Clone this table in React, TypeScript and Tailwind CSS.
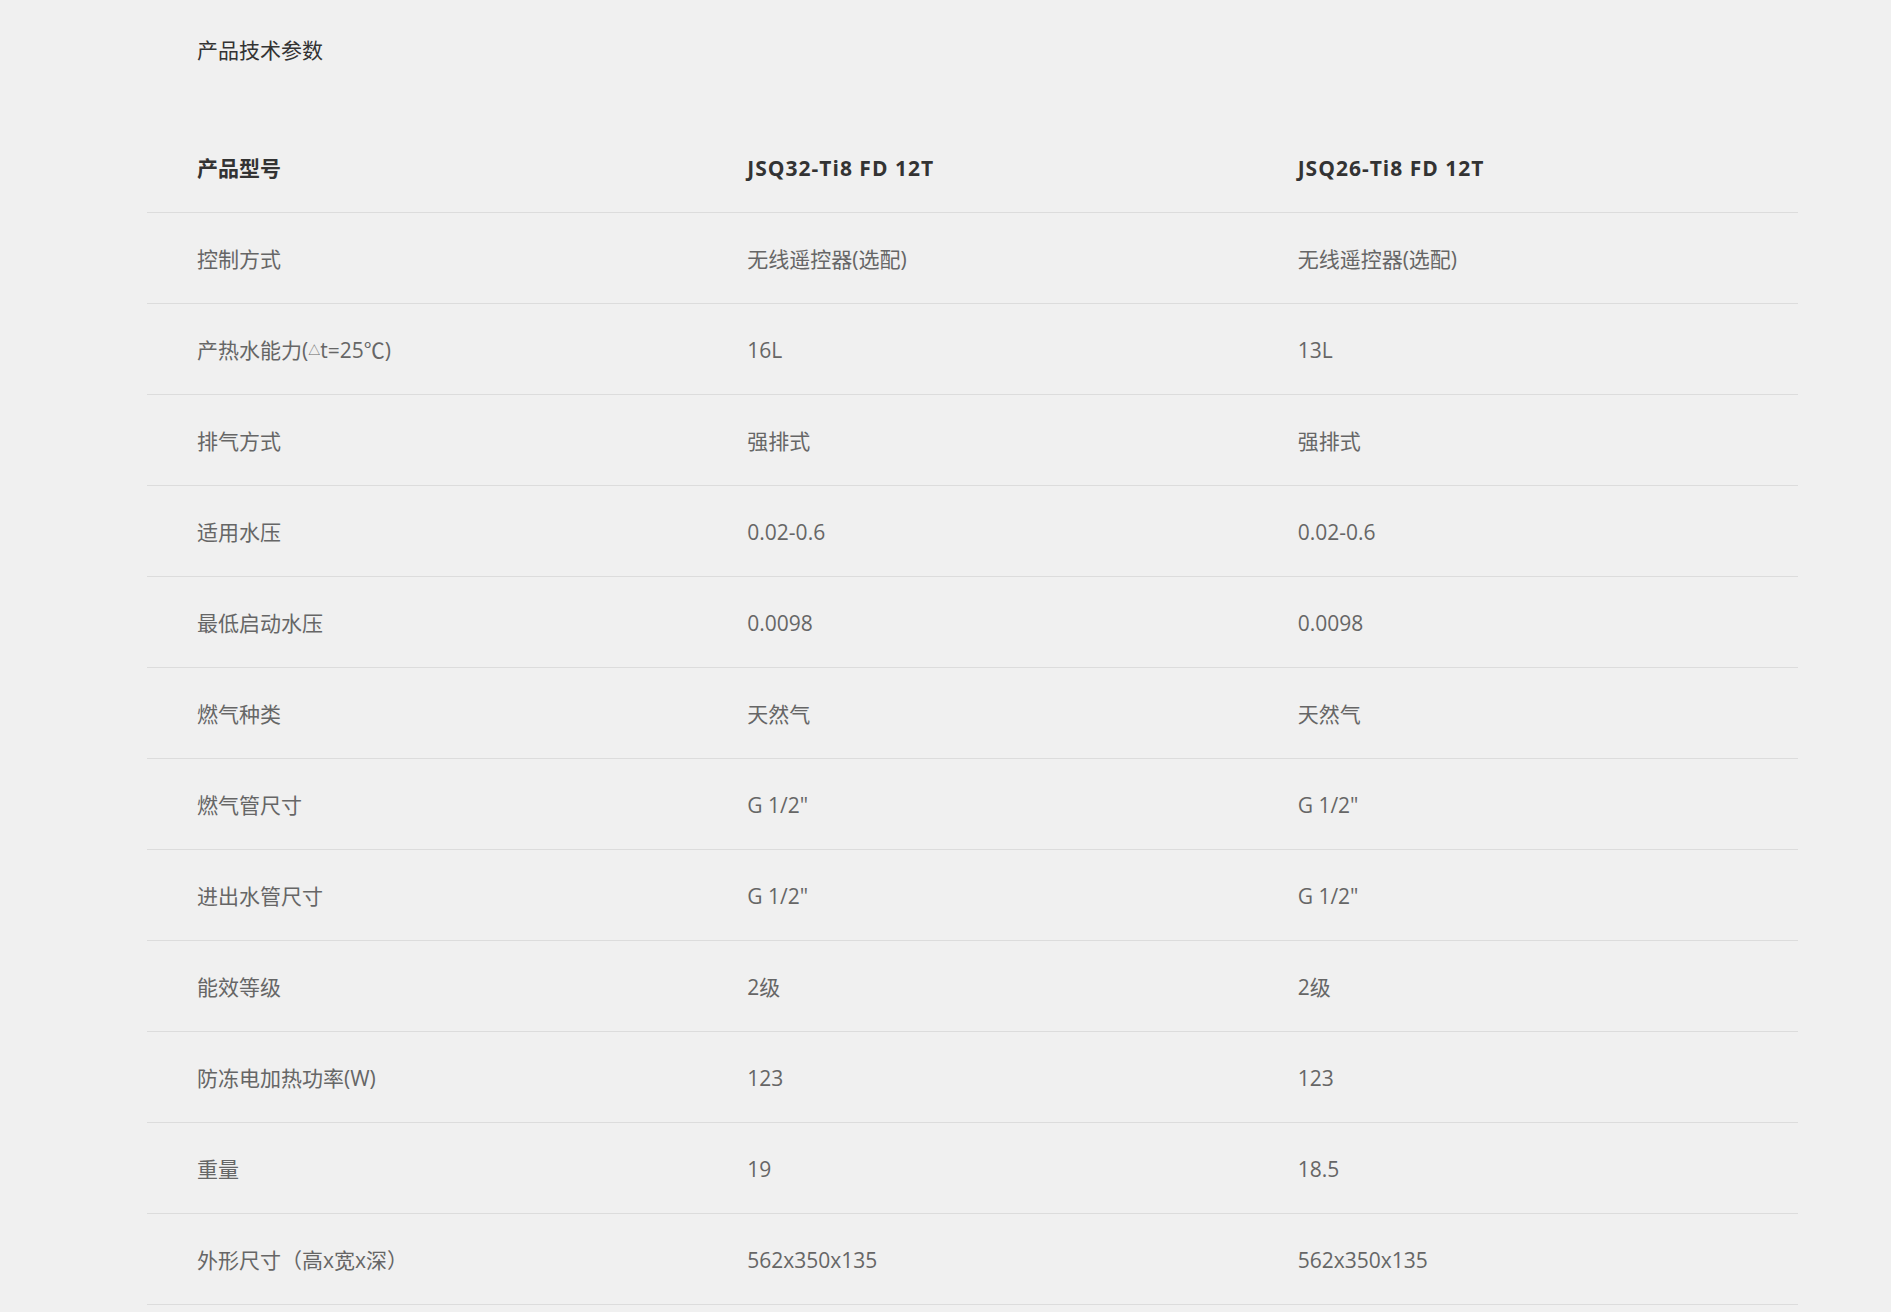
import type { ReactNode } from "react";

const rows: [ReactNode, string, string][] = [
  ["控制方式", "无线遥控器(选配)", "无线遥控器(选配)"],
  [
    <>
      产热水能力(<span className="text-[12px] align-[5px]">△</span>t=25℃)
    </>,
    "16L",
    "13L",
  ],
  ["排气方式", "强排式", "强排式"],
  ["适用水压", "0.02-0.6", "0.02-0.6"],
  ["最低启动水压", "0.0098", "0.0098"],
  ["燃气种类", "天然气", "天然气"],
  ["燃气管尺寸", "G 1/2\"", "G 1/2\""],
  ["进出水管尺寸", "G 1/2\"", "G 1/2\""],
  ["能效等级", "2级", "2级"],
  ["防冻电加热功率(W)", "123", "123"],
  ["重量", "19", "18.5"],
  ["外形尺寸（高x宽x深）", "562x350x135", "562x350x135"],
];

function Row({ cells, head }: { cells: [ReactNode, string, string]; head?: boolean }) {
  return (
    <div className="grid grid-cols-3 h-[91px] border-b border-[#dcdcdc]">
      {cells.map((c, i) => (
        <div
          key={i}
          className={
            head
              ? i === 0
                ? "flex items-center pl-[50px] pt-[4px] font-bold text-[#333333]"
                : "flex items-center pl-[50px] pt-[4px] font-bold tracking-[1px] text-[#333333]"
              : "flex items-center pl-[50px] pt-[4px] text-[#666666]"
          }
        >
          {c}
        </div>
      ))}
    </div>
  );
}

export default function App() {
  return (
    <div className="min-h-screen bg-[#f0f0f0] font-['Open_Sans','Noto_Sans_CJK_SC',sans-serif] text-[21px]">
      <div className="pl-[147px]">
        <div className="w-[1651px]">
          <h1 className="pl-[50px] pt-[35px] leading-[30px] text-[#333333]">产品技术参数</h1>
          <div className="mt-[57px]">
            <Row cells={["产品型号", "JSQ32-Ti8 FD 12T", "JSQ26-Ti8 FD 12T"]} head />
            {rows.map((r, i) => (
              <Row key={i} cells={r} />
            ))}
          </div>
        </div>
      </div>
    </div>
  );
}
